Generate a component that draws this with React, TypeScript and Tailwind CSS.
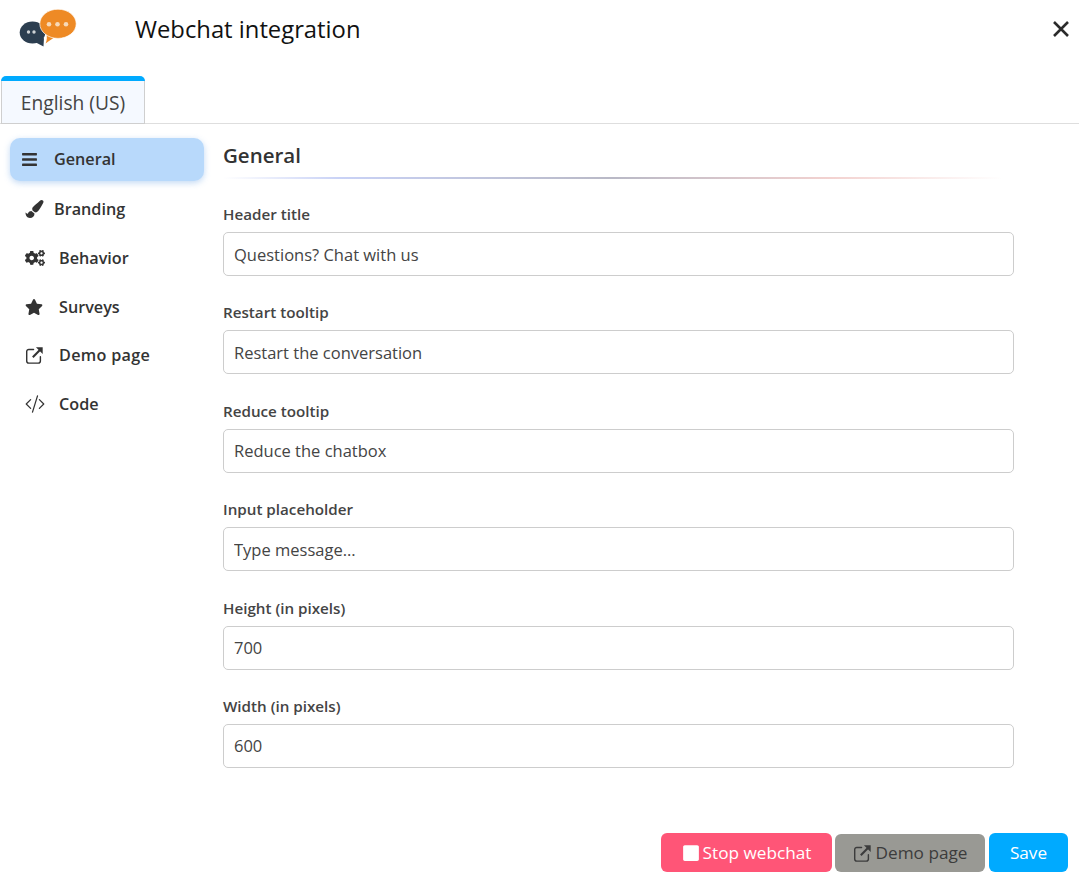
import { FaBars, FaPaintBrush, FaCogs, FaStar, FaSquare } from "react-icons/fa";
import { BsCodeSlash } from "react-icons/bs";

const font = "font-['Open_Sans','Noto_Sans',sans-serif]";

function ExternalIcon({ className }: { className?: string }) {
  return (
    <svg viewBox="0 0 20 20" className={className} fill="none" stroke="currentColor" strokeWidth="1.5">
      <path d="M9 3.6H4a2.2 2.2 0 0 0-2.2 2.2v10A2.2 2.2 0 0 0 4 18h10a2.2 2.2 0 0 0 2.2-2.2v-4.6" strokeLinecap="round" />
      <path d="M8.2 11.8 17 3" strokeWidth="2.2" />
      <path d="M11.5 1.4h7.1v7.1z" fill="currentColor" stroke="none" />
    </svg>
  );
}

function Logo() {
  return (
    <svg width="58" height="48" viewBox="0 0 58 48">
      <ellipse cx="13.5" cy="24.5" rx="12.8" ry="11" fill="#2c3e50" />
      <path d="M14 33 L25 30 L24.5 38.5 Z" fill="#2c3e50" />
      <circle cx="9.5" cy="24" r="1.7" fill="#cfd3d6" />
      <circle cx="15" cy="24" r="1.7" fill="#cfd3d6" />
      <path d="M27 24 L36 29 L30 33 L26.5 35.5 Q29 31 27 24 Z" fill="#ee8a25" />
      <ellipse cx="39" cy="15.8" rx="18.2" ry="14.6" fill="#ee8a25" stroke="#fff" strokeWidth="0.7" />
      <circle cx="30" cy="16.2" r="2.3" fill="#f7d9b8" />
      <circle cx="38.5" cy="16.2" r="2.3" fill="#f7d9b8" />
      <circle cx="47" cy="16.2" r="2.3" fill="#f7d9b8" />
    </svg>
  );
}

const nav = [
  { label: "Branding", icon: <FaPaintBrush className="w-[19px] h-[18px]" />, gap: "gap-[10px]", extra: "" },
  { label: "Behavior", icon: <FaCogs className="w-[20px] h-[16px]" />, gap: "gap-[14px]", extra: "" },
  { label: "Surveys", icon: <FaStar className="w-[18px] h-[16px]" />, gap: "gap-[16px]", extra: "" },
  { label: "Demo page", icon: <ExternalIcon className="w-[19px] h-[19px]" />, gap: "gap-[15px]", extra: "tracking-[0.3px]" },
  { label: "Code", icon: <BsCodeSlash className="w-[20px] h-[20px]" />, gap: "gap-[14px]", extra: "" },
];

const fields = [
  ["Header title", "Questions? Chat with us"],
  ["Restart tooltip", "Restart the conversation"],
  ["Reduce tooltip", "Reduce the chatbox"],
  ["Input placeholder", "Type message..."],
  ["Height (in pixels)", "700"],
  ["Width (in pixels)", "600"],
];

export default function App() {
  return (
    <div className={`${font} w-[1079px] h-[875px] bg-white text-[#333] flex flex-col overflow-hidden`}>
      <header className="h-[76px] flex items-start shrink-0">
        <div className="ml-[19px] mt-[8px]"><Logo /></div>
        <h1 className="ml-[58px] mt-[11px] text-[23.8px] leading-[36px] text-[#111]">Webchat integration</h1>
        <svg viewBox="0 0 16 16" className="ml-auto mr-[10px] mt-[21px] w-[16px] h-[16px]" stroke="#2b2b2b" strokeWidth="2.6">
          <path d="M1 1 15 15M15 1 1 15" />
        </svg>
      </header>

      <div className="h-[48px] border-b border-[#dedede] shrink-0 pl-[1px]">
        <div className="w-[144px] h-[48px] rounded-t-[5px] border-t-[5px] border-[#00aaff] bg-[#f5f9ff] relative">
          <div className="h-full border-x border-b border-[#cfcfcf] flex items-center justify-center text-[19.2px] text-[#444] pt-[2px]">English (US)</div>
        </div>
      </div>

      <div className="flex flex-1 min-h-0">
        <nav className="w-[194px] ml-[10px] mt-[14px] shrink-0">
          <div className="h-[43px] rounded-[10px] bg-[#b8d9fb] shadow-[0_2px_6px_rgba(120,170,230,0.45)] flex items-center pl-[11px] gap-[16px] text-[16.2px] font-semibold pb-[1px]">
            <FaBars className="w-[17px] h-[17px]" />
            <span>General</span>
          </div>
          <div className="mt-[4px] flex flex-col">
            {nav.map((n) => (
              <div key={n.label} className={`h-[48.75px] flex items-center pl-[15px] text-[16.2px] font-semibold ${n.gap} ${n.extra}`}>
                {n.icon}
                <span>{n.label}</span>
              </div>
            ))}
          </div>
        </nav>

        <main className="ml-[19px] flex-1 flex flex-col">
          <h2 className="mt-[13px] text-[20.5px] leading-[36px] font-semibold h-[36px] text-[#333]">General</h2>
          <div className="mt-[4px] h-[2px] w-[780px] bg-[linear-gradient(90deg,transparent,#c9d2f6_15%,#b9b9c6_50%,#f3d2d0_78%,transparent)]" />
          <div className="mt-[24px] flex flex-col gap-[25.4px] w-[791px]">
            {fields.map(([label, value]) => (
              <label key={label} className="block">
                <span className="block text-[15.2px] leading-[22px] font-semibold text-[#444]">{label}</span>
                <input
                  readOnly
                  value={value}
                  className="mt-[7px] block w-full h-[44px] px-[10px] rounded-[5px] border border-[#cdcdcd] text-[16.5px] text-[#444] outline-none bg-white"
                />
              </label>
            ))}
          </div>
          <div className="mt-auto mb-[3px] flex items-center justify-end pr-[11px] text-[17.2px]">
            <button className="h-[39px] w-[171px] rounded-[6px] bg-[#ff5577] text-white flex items-center justify-center gap-[3px]">
              <FaSquare className="w-[18px] h-[18px]" /> Stop webchat
            </button>
            <button className="ml-[3px] mt-[1px] h-[38px] w-[150px] rounded-[6px] bg-[#999994] text-[#3c3c3c] flex items-center justify-center gap-[4px]">
              <ExternalIcon className="w-[19px] h-[19px]" /> Demo page
            </button>
            <button className="ml-[4px] h-[39px] w-[79px] rounded-[6px] bg-[#00aaff] text-white">Save</button>
          </div>
        </main>
      </div>
    </div>
  );
}
